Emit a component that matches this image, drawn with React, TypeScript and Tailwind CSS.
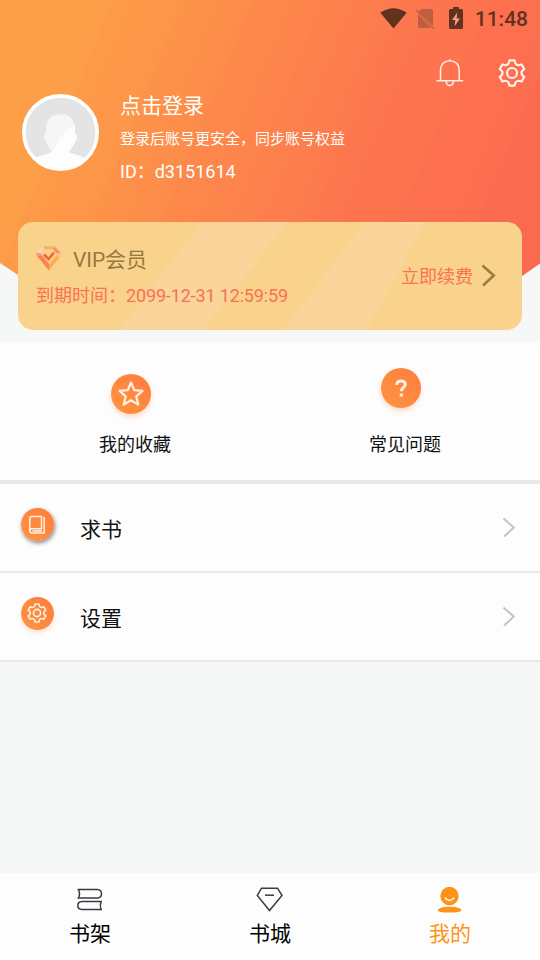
import type { ReactNode } from "react";

// Six-toothed gear outline centred on the origin
function gearPath(): string {
  const points: string[] = [];
  const at = (x: number, y: number, deg: number) => {
    const r = (deg * Math.PI) / 180;
    const px = x * Math.cos(r) - y * Math.sin(r);
    const py = x * Math.sin(r) + y * Math.cos(r);
    return `${px.toFixed(2)} ${py.toFixed(2)}`;
  };
  for (let i = 0; i < 6; i++) {
    const a = i * 60;
    points.push(
      `${i === 0 ? "M" : "L"}${at(-3.4, -9.6, a)}`,
      `L${at(-2.6, -12.6, a)}`,
      `L${at(2.6, -12.6, a)}`,
      `L${at(3.4, -9.6, a)}`,
      `Q${at(4.5, -7.8, a)} ${at(-3.4, -9.6, a + 60)}`,
    );
  }
  return points.join("") + "Z";
}

const GEAR = gearPath();

function GearIcon({
  className,
  strokeWidth = 2,
}: {
  className: string;
  strokeWidth?: number;
}) {
  return (
    <svg
      viewBox="-14 -14 28 28"
      className={className}
      fill="none"
      stroke="currentColor"
      strokeWidth={strokeWidth}
      strokeLinejoin="round"
    >
      <path d={GEAR} />
      <circle r="5" />
    </svg>
  );
}

function Chevron({ className }: { className: string }) {
  return (
    <svg viewBox="0 0 14 22" className={className} fill="none" stroke="currentColor">
      <path d="M1.2 1.5 12 11 1.8 20.5" />
    </svg>
  );
}

function HeaderBackground() {
  return (
    <svg
      viewBox="0 0 540 342"
      className="absolute inset-0 h-[342px] w-[540px]"
      preserveAspectRatio="none"
    >
      <defs>
        <linearGradient
          id="sky"
          gradientUnits="userSpaceOnUse"
          x1="60"
          y1="60"
          x2="518"
          y2="252"
        >
          <stop offset="0" stopColor="#fd9f48" />
          <stop offset="0.2" stopColor="#fd9849" />
          <stop offset="0.5" stopColor="#fd874d" />
          <stop offset="0.8" stopColor="#fd7751" />
          <stop offset="1" stopColor="#fc7252" />
        </linearGradient>
        <clipPath id="arch">
          <path d="M0 0H540V263.500L522 276C460 316 360 326 270 326S80 316 18 275L0 263Z" />
        </clipPath>
      </defs>
      <g clipPath="url(#arch)">
        <rect width="540" height="342" fill="url(#sky)" />
        <g fill="#fb6455" fillOpacity="0.05">
          <path d="M114 0H560V342H-29Z" />
          <path d="M184 0H560V342H41Z" />
          <path d="M253 0H560V342H110Z" />
          <path d="M324 0H560V342H181Z" />
          <path d="M403 0H560V342H260Z" />
        </g>
        <g fill="#fa6255" fillOpacity="0.1">
          <path d="M492 0H560V342H349Z" />
          <path d="M570 0H600V342H427Z" />
        </g>
      </g>
    </svg>
  );
}

function StatusBar() {
  return (
    <div className="flex h-9 items-center justify-end pr-3 text-[#62321f]">
      <svg viewBox="380 5 85 24" className="mr-[10px] h-6 w-[85px]">
        <path d="M380.300 11.800Q393.500 2.500 406.700 11.800L393.500 27.500Z" fill="currentColor" />
        <g fill="#be603f">
          <path d="M421.500 8H431.500Q433 8 433 9.500V24.500L418.500 10.600Z" />
          <path d="M418 13 431.500 27H419.500Q418 27 418 25.500Z" />
          <path d="M416.700 8.500 434.800 27.200 433.800 28.200 415.700 9.500Z" />
        </g>
        <path
          d="M453 6H459V8H461.500Q463 8 463 9.500V26.500Q463 28 461.500 28H450.500Q449 28 449 26.500V9.500Q449 8 450.500 8H453Z"
          fill="currentColor"
        />
        <path d="M457.200 11.500 452 19H455.300L454.600 25.300 460 17.400H456.700Z" fill="#fc9b7b" />
      </svg>
      <span className="pt-[2px] text-[21px] leading-none font-medium">11:48</span>
    </div>
  );
}

function BellIcon() {
  return (
    <svg
      viewBox="436 60 28 28"
      className="size-7"
      fill="none"
      stroke="currentColor"
      strokeWidth="1.5"
      strokeLinecap="round"
    >
      <path d="M440.500 81V71.500C440.500 65.500 444.300 61.700 449.800 61.700S459.200 65.500 459.200 71.500V81M449.800 60.800V61.500M437 81.700H462.700M446.200 82.500C446.500 85.300 447.800 86.500 449.800 86.500S453.100 85.300 453.400 82.500" />
    </svg>
  );
}

function Avatar() {
  return (
    <svg viewBox="0 0 76 76" className="mt-[5px] size-[77px]">
      <defs>
        <clipPath id="face">
          <circle cx="38" cy="38" r="36" />
        </clipPath>
      </defs>
      <circle cx="38" cy="38" r="36.500" fill="#e4e4e4" />
      <g clipPath="url(#face)">
        <path
          d="M38 20C46 20 51.500 24.500 52 32L52.600 39.500C55 39.500 55 45 52 47.500C50 52 48 55 46.200 57V62H29.800V57C28 55 25.500 52 24 47.500C21 45 21 39.500 23.400 39.500L24 32C24.500 24.500 30 20 38 20Z"
          fill="#f5f7f7"
        />
        <path
          d="M52 31 52.600 39.500C55 39.500 55 45 52 47.500C50 52 48 55 46.200 57C51 60 58 60 63 64V76H12V64C18 60 25 60 29.800 57L37 44 45 36Z"
          fill="#fdfdfd"
        />
      </g>
      <circle cx="38" cy="38" r="36.200" fill="none" stroke="#fefefe" strokeWidth="3.600" />
    </svg>
  );
}

function GemIcon() {
  return (
    <svg viewBox="0 0 26 26" className="size-[26px]">
      <path d="M6 3.500 20 3.500 23 9 13 21 3 9Z" fill="#fbd08a" />
      <path d="M8 1H18L20 4.200H6.500Z" fill="#fdb267" />
      <path d="M18 1 25 8H20L16.800 4.200Z" fill="#fb9160" />
      <path d="M0.500 8 7.500 1V5L4 9Z" fill="#fcd4ba" />
      <path d="M0.500 8 4.500 8.500 13 19V25.500L1 11Z" fill="#fa8150" />
      <path d="M25.300 8 21 10 13 19V25.500L24 12Z" fill="#fdae55" />
      <path d="M0.500 8 4.500 8.300 5.500 11H1Z" fill="#fb9b78" />
      <path d="M20 8H25.300V12H21.500Z" fill="#fcc08d" />
      <path d="M8 9.500 12.500 14 18 7.500" fill="none" stroke="#ef6a32" strokeWidth="2.600" />
    </svg>
  );
}

function VipCard() {
  return (
    <div className="relative mx-[18px] mt-[34px] flex h-[108px] overflow-hidden rounded-[15px] bg-[#f9d38b]">
      <svg viewBox="0 0 504 108" className="absolute inset-0 h-[108px] w-[504px]">
        <g fill="#f9d59b">
          <path d="M184 0H269L186 108H101Z" />
          <path d="M347 0H407L349 108H265Z" />
        </g>
      </svg>
      <div className="relative flex-1 pt-[20px] pl-[18px]">
        <div className="flex h-8 items-center">
          <GemIcon />
          <span className="ml-[11px] pt-[3px] text-[21px] leading-8 tracking-[-0.1px] text-[#967842]">
            VIP会员
          </span>
        </div>
        <p className="pt-[8px] text-[18px] leading-7 text-[#fc7055]">
          到期时间：<span className="tracking-[-0.15px]">2099-12-31 12:59:59</span>
        </p>
      </div>
      <div className="relative flex items-center pr-[26px]">
        <span className="text-[18px] text-[#fc7055]">立即续费</span>
        <Chevron className="mb-[2px] ml-[8px] h-[23px] w-[15px] stroke-[2.6] text-[#9b7e44]" />
      </div>
    </div>
  );
}

function Shortcut({
  label,
  top,
  children,
}: {
  label: string;
  top: string;
  children: ReactNode;
}) {
  return (
    <div className="flex flex-1 flex-col items-center">
      <div className="h-[89px]">
        <div
          className={`mr-[8px] flex size-10 items-center justify-center rounded-full bg-linear-to-tr from-[#ff9541] to-[#fd7c3d] text-white shadow-[0_3px_5px_#fd7c3d40] ${top}`}
        >
          {children}
        </div>
      </div>
      <span className="text-[18px] leading-7 text-[#111]">{label}</span>
    </div>
  );
}

function ListRow({
  label,
  shadow,
  icon,
}: {
  label: string;
  shadow: string;
  icon: ReactNode;
}) {
  return (
    <div className="flex h-[89px] items-center border-b-2 border-[#e8e8e8] bg-[#fdfdfd] pr-6 pl-[21px]">
      <div
        className={`mb-[6px] flex size-[33px] items-center justify-center rounded-full bg-linear-to-tr from-[#ff9541] to-[#fd7c3d] text-white ${shadow}`}
      >
        {icon}
      </div>
      <span className="ml-[26px] flex-1 pt-1 text-[21px] leading-8 text-[#111]">{label}</span>
      <Chevron className="mb-px h-[21px] w-[14px] stroke-[2.1] text-[#c4c4c4]" />
    </div>
  );
}

function Tab({
  label,
  active,
  children,
}: {
  label: string;
  active?: boolean;
  children: ReactNode;
}) {
  return (
    <div
      className={`flex flex-1 flex-col items-center pt-[12px] ${active ? "text-[#fd9419]" : "text-black"}`}
    >
      {children}
      <span className="mt-[5px] text-[21px] leading-8">{label}</span>
    </div>
  );
}

export default function App() {
  return (
    <div className="flex h-[960px] w-[540px] flex-col overflow-hidden bg-[#f6f8f8] font-[Roboto,'Noto_Sans_CJK_SC',sans-serif]">
      <header className="relative h-[342px]">
        <HeaderBackground />
        <div className="relative">
          <StatusBar />
          <div className="flex h-[53px] items-start justify-end gap-[34px] pt-[23px] pr-[14px] text-[#fff1ea]">
            <BellIcon />
            <GearIcon className="size-7" strokeWidth={2.2} />
          </div>
          <div className="flex pl-[22px] text-white">
            <Avatar />
            <div className="ml-[21px]">
              <p className="pt-px text-[21px] leading-[33px]">点击登录</p>
              <p className="text-[15px] leading-[33px]">登录后账号更安全，同步账号权益</p>
              <p className="text-[18px] leading-8">ID：d3151614</p>
            </div>
          </div>
          <VipCard />
        </div>
      </header>

      {/* Shortcuts */}
      <section className="flex h-[142px] border-b-4 border-[#e8e8e8] bg-[#fdfdfd]">
        <Shortcut label="我的收藏" top="mt-[32px]">
          <svg viewBox="0 0 28 28" className="size-7" fill="none" stroke="#fff0e4" strokeWidth="2.200">
            <path
              d="M14 2.500 17.300 10.200 25.500 10.900 19.300 16.400 21.200 24.600 14 20.300 6.800 24.600 8.700 16.400 2.500 10.900 10.700 10.200Z"
              strokeLinejoin="round"
            />
          </svg>
        </Shortcut>
        <Shortcut label="常见问题" top="mt-[26px]">
          <svg viewBox="0 0 20 20" className="size-5" fill="none" stroke="#fff0e4" strokeWidth="2.900">
            <path d="M5.800 7C5.800 4.300 7.500 3 10 3S14.300 4.200 14.300 6.500C14.300 9.300 10.300 9.500 10.300 13.200" />
            <path d="M10.300 15.600V18.600" strokeWidth="3.200" />
          </svg>
        </Shortcut>
      </section>

      <section>
        <ListRow
          label="求书"
          shadow="shadow-[1px_2px_4px_#33333399]"
          icon={
            <svg viewBox="0 0 18 20" className="mr-px h-5 w-[18px]" fill="none" stroke="#fff0e4" strokeWidth="1.500">
              <path d="M1.800 16.500V3.500Q1.800 1.500 3.800 1.500H13.500V13.700H3.500Q1.800 13.700 1.800 15.700T3.800 18H16.200V2" />
              <path d="M4.500 16H14" />
            </svg>
          }
        />
        <ListRow
          label="设置"
          shadow="shadow-[0_3px_5px_#fd7c3d30]"
          icon={<GearIcon className="mr-px mb-px size-5 text-[#fff0e4]" strokeWidth={2.3} />}
        />
      </section>

      {/* Bottom tabs */}
      <nav className="mt-auto flex h-[87px] bg-[#fdfdfd]">
        <Tab label="书架">
          <svg viewBox="0 0 28 28" className="size-7" fill="none" stroke="#383a46" strokeWidth="1.500">
            <path d="M1.500 4.500H21.500Q25.500 4.800 25.500 8.700T21.500 13H1.500M2.800 4.500Q4.200 8.800 2.800 13" />
            <path d="M26 16.500H6Q1.800 16.700 1.800 20.500T6 24.500H26M25 16.500Q23.600 20.500 25 24.500" />
          </svg>
        </Tab>
        <Tab label="书城">
          <svg viewBox="0 0 28 28" className="size-7" fill="none" stroke="#383a46" strokeWidth="1.500">
            <path d="M5.500 3.200H21.500L26 10.500 13.500 25.500 1.300 10.500Z" />
            <path d="M9 10.200H18" />
          </svg>
        </Tab>
        <Tab label="我的" active>
          <svg viewBox="0 0 28 28" className="size-7" fill="currentColor">
            <circle cx="13.500" cy="11" r="9.200" />
            <path d="M8.800 12.800Q13.500 18 18.200 12.800" fill="none" stroke="#fff" strokeWidth="1.500" />
            <path d="M1.700 25.200C3 22.500 8 21.800 13.500 21.800S24.500 22.500 25.500 25.200Q25.500 27.500 13.500 27.500T1.700 25.200Z" />
          </svg>
        </Tab>
      </nav>
    </div>
  );
}
